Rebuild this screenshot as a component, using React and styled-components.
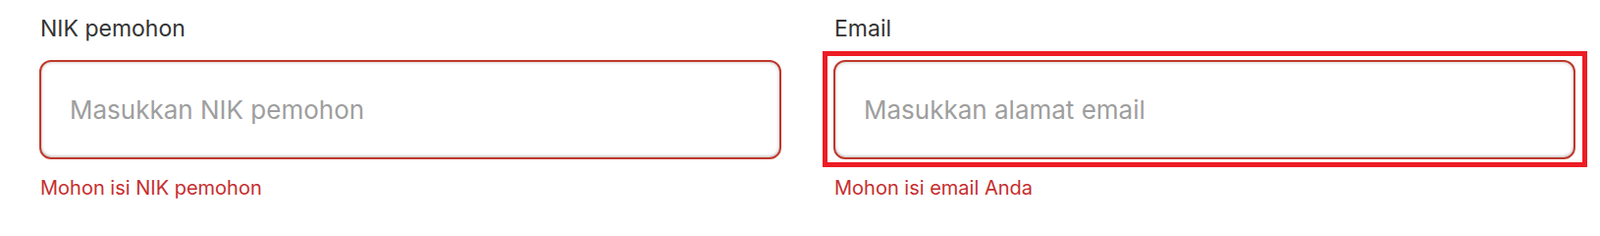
import React, { useState } from 'react';
import styled, { createGlobalStyle } from 'styled-components';

const GlobalStyle = createGlobalStyle`
  html, body {
    margin: 0;
    padding: 0;
    background: #ffffff;
  }
  body {
    font-family: Inter, "Noto Sans", "Liberation Sans", sans-serif;
    -webkit-font-smoothing: antialiased;
  }
`;

// STYLES
const FormGrid = styled.form`
  display: grid;
  grid-template-columns: 756px 756px;
  column-gap: 53px;
  padding: 15px 0 0 40px;
`;

const Field = styled.div`
  display: flex;
  flex-direction: column;
`;

const Label = styled.label`
  font-size: 23px;
  line-height: 29px;
  color: #333333;
  margin-bottom: 17px;
  padding-left: 1px;
`;

const InputWrap = styled.div`
  position: relative;
`;

const TextInput = styled.input`
  box-sizing: border-box;
  width: 100%;
  height: 101px;
  padding: 0 29px;
  border: 2px solid ${(p) => (p.$invalid ? '#c0392b' : '#cccccc')};
  border-radius: 12px;
  background: #ffffff;
  box-shadow: inset 0 0 3px 1px rgba(0, 0, 0, 0.16), inset 0 -2px 2px rgba(0, 0, 0, 0.08);
  font-family: inherit;
  font-size: 26px;
  color: #333333;
  outline: none;

  &::placeholder {
    color: #9e9e9e;
  }
`;

// annotation frame drawn over the marked field
const Highlight = styled.div`
  position: absolute;
  top: -9px;
  left: -11px;
  right: -12px;
  bottom: -8px;
  border: 5px solid #ed1c24;
  pointer-events: none;
`;

const ErrorText = styled.p`
  margin: 16px 0 0;
  padding-left: 1px;
  font-size: 20px;
  line-height: 26px;
  color: #c62d2d;
`;

const fields = [
  { id: 'nik', label: 'NIK pemohon', placeholder: 'Masukkan NIK pemohon', error: 'Mohon isi NIK pemohon' },
  { id: 'email', label: 'Email', placeholder: 'Masukkan alamat email', error: 'Mohon isi email Anda', marked: true },
];

const App = () => {
  const [values, setValues] = useState({ nik: '', email: '' });

  return (
    <>
      <GlobalStyle />
      <FormGrid onSubmit={(e) => e.preventDefault()}>
        {fields.map((f) => (
          <Field key={f.id}>
            <Label htmlFor={f.id}>{f.label}</Label>
            <InputWrap>
              <TextInput
                id={f.id}
                type="text"
                $invalid={!values[f.id]}
                placeholder={f.placeholder}
                value={values[f.id]}
                onChange={(e) => setValues({ ...values, [f.id]: e.target.value })}
              />
              {f.marked && <Highlight />}
            </InputWrap>
            {!values[f.id] && <ErrorText>{f.error}</ErrorText>}
          </Field>
        ))}
      </FormGrid>
    </>
  );
};

export default App;
